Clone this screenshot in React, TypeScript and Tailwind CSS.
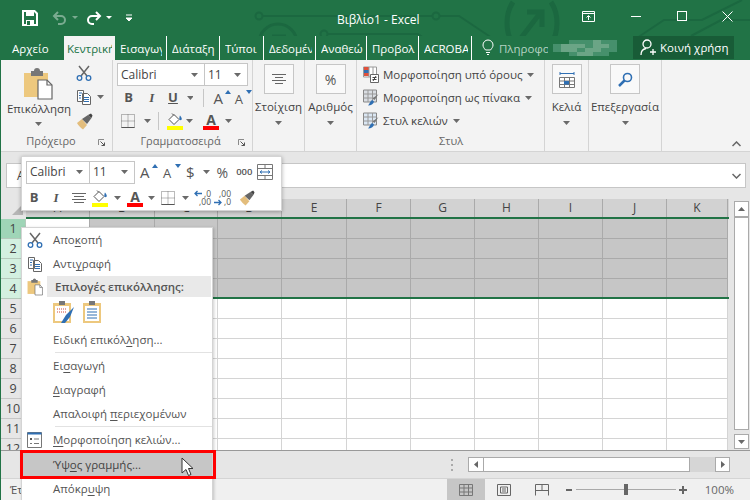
import React from "react";

const COLS = [
  ["A", 64], ["B", 65], ["C", 63], ["D", 64], ["E", 65], ["F", 64],
  ["G", 64], ["H", 64], ["I", 64], ["J", 64], ["K", 61],
] as const;
const ROWS = [1, 2, 3, 4, 5, 6, 7, 8, 9, 10, 11, 12];

const TABS = [
  ["Εισαγωγή", 52], ["Διάταξη", 53], ["Τύποι", 44], ["Δεδομένα", 52],
  ["Αναθεώρηση", 51], ["Προβολή", 52], ["ACROBAT", 53],
] as const;

const BLUR = [
  [0, 0, 1, 1, 1, 2, 1, 1, 0], [1, 2, 2, 2, 1, 2, 2, 1, 0], [1, 2, 2, 1, 2, 2, 1, 1, 0], [0, 0, 1, 2, 2, 1, 1, 0, 0],
];
const BLUR_BG = ["#217346", "#46906c", "#6ba586"];

function Caret({ className = "" }: { className?: string }) {
  return (
    <svg width="7" height="4" viewBox="0 0 7 4" className={className}>
      <path d="M0 0h7L3.5 4z" fill="#6a6a6a" />
    </svg>
  );
}

function Launcher() {
  return (
    <svg width="7" height="7" viewBox="0 0 7 7" className="absolute right-[7px] bottom-[5px]">
      <path d="M.5 6V.5H6" fill="none" stroke="#8a8a8a" />
      <path d="M2.5 2.5L6.5 6.5M3.5 6.5h3v-3" fill="none" stroke="#555" />
    </svg>
  );
}

function Scissors({ size = 16 }: { size?: number }) {
  return (
    <svg width={size} height={size} viewBox="0 0 16 16">
      <path d="M3 1l8 10M13 1L5 11" stroke="#666" strokeWidth="1.5" fill="none" />
      <circle cx="3.5" cy="13" r="2.3" fill="none" stroke="#2f6fb3" strokeWidth="1.3" />
      <circle cx="12.5" cy="13" r="2.3" fill="none" stroke="#2f6fb3" strokeWidth="1.3" />
    </svg>
  );
}

function CopyIcon() {
  return (
    <svg width="16" height="16" viewBox="0 0 16 16">
      <path d="M1.5 1.5h6v11h-6zM6.5 4.5h5l3 3v8h-8z" fill="#fff" stroke="#666" />
      <path d="M3 4h3M3 6.5h2M3 9h2M8 8.500h5M8 10.500h5M8 12.500h5" stroke="#2f6fb3" />
    </svg>
  );
}

function Brush({ size = 17 }: { size?: number }) {
  return (
    <svg width={size} height={size} viewBox="0 0 17 17">
      <path d="M1 10l5-4 5 6-4 4.500C5 15 2 12 1 10z" fill="#e3bd7c" />
      <path d="M6 6l6-4 3.500 3-4.500 6z" fill="#666" />
      <path d="M12 2l3-1.500 1.500 2L15.500 5z" fill="#444" />
    </svg>
  );
}

function PasteIcon({ small = false }: { small?: boolean }) {
  const s = small ? 16 : 30;
  return (
    <svg width={s} height={small ? 18 : 32} viewBox="0 0 30 32">
      <path d="M1 5h24v24H1z" fill="#edc87e" />
      <path d="M8 3h3a3 3 0 016 0h3v5H8z" fill="#777" />
      <path d="M15 12h9l5 5v14H15z" fill="#fff" stroke="#666" strokeWidth="1.200" />
      <path d="M24 12v5h5" fill="none" stroke="#666" strokeWidth="1.200" />
    </svg>
  );
}

function BucketIcon() {
  return (
    <span className="flex flex-col items-center w-[16px]">
      <svg width="16" height="13" viewBox="0 0 16 13">
        <path d="M7 1.500L2 6.500l5 5 5-5z" fill="#fff" stroke="#555" />
        <path d="M5 .5l2 2" stroke="#555" />
        <path d="M13 2.500c1.500 2 2.300 3.300 1.500 4.300s-2.500 0-2.200-1.300.2-2.200.7-3z" fill="#2f6fb3" />
      </svg>
      <span className="w-[16px] h-[4px] bg-[#ffff00]" />
    </span>
  );
}

function FontColor() {
  return (
    <span className="flex flex-col items-center w-[16px]">
      <span className="text-[14px] leading-[13px] h-[13px] font-bold text-[#555]">A</span>
      <span className="w-[16px] h-[4px] bg-[#ff0000]" />
    </span>
  );
}

function BorderIcon() {
  return (
    <svg width="14" height="14" viewBox="0 0 14 14">
      <path d="M.5.500h13v13H.5zM7 .5v13M.5 7h13" fill="none" stroke="#777" strokeDasharray="1 1" />
      <path d="M.5 13.500h13" stroke="#555" />
    </svg>
  );
}

function GrowFont({ down = false }: { down?: boolean }) {
  return (
    <span className="relative inline-flex w-[18px] h-[16px] items-end">
      <span className={`${down ? "text-[13px]" : "text-[15px]"} leading-none text-[#555] font-medium`}>A</span>
      <svg width="6" height="4" viewBox="0 0 6 4" className="absolute right-0 top-0">
        <path d={down ? "M0 0h6L3 4z" : "M0 4h6L3 0z"} fill="#2f6fb3" />
      </svg>
    </span>
  );
}

function DecimalIcon({ top, bottom, arrowTop }: { top: string; bottom: string; arrowTop: boolean }) {
  return (
    <span className="relative w-[17px] h-[18px] text-[8.500px] leading-[8px] text-[#555] text-right flex flex-col justify-center">
      <span>{top}</span>
      <span>{bottom}</span>
      <svg width="8" height="7" viewBox="0 0 8 7" className={`absolute left-0 ${arrowTop ? "top-[1px]" : "bottom-[1px]"}`}>
        {arrowTop
          ? <path d="M8 3.500H1M3.500 1L1 3.500 3.500 6" fill="none" stroke="#2f6fb3" strokeWidth="1.300" />
          : <path d="M0 3.500h7M4.500 1L7 3.500 4.500 6" fill="none" stroke="#2f6fb3" strokeWidth="1.300" />}
      </svg>
    </span>
  );
}

function Combo({ label, w }: { label: string; w: string }) {
  return (
    <div className={`${w} h-[23px] flex items-center justify-between bg-white border border-[#c6c6c6] pl-[3px] pr-[6px] text-[12px] text-[#444]`}>
      <span>{label}</span>
      <Caret />
    </div>
  );
}

function CondFormatIcon() {
  return (
    <svg width="16" height="17" viewBox="0 0 16 17">
      <path d="M.5 1h13v10H.5z" fill="#fff" stroke="#999" />
      <path d="M1 1h5v3H1z" fill="#e0503a" />
      <path d="M1 4h5v3H1z" fill="#2f6fb3" />
      <path d="M1 7h5v3H1z" fill="#e0503a" />
      <path d="M6 1v10M10 1v10" stroke="#999" />
      <path d="M7.500 8.500h8v8h-8z" fill="#fff" stroke="#666" />
      <path d="M9.500 11.500h4M9.500 13.500h4M10 15l3-5" stroke="#444" />
    </svg>
  );
}

function TableIcon({ tint }: { tint: string }) {
  return (
    <svg width="16" height="17" viewBox="0 0 16 17">
      <path d="M.5 1h13v12H.5z" fill={tint} stroke="#888" />
      <path d="M5 1v12M9.500 1v12M.5 5h13M.5 9h13" stroke="#999" />
      <path d="M15.500 5l-4 6-2-1.500z" fill="#777" />
      <path d="M9 11l2 1.500c-.5 2.500-3 4-6 4 1.500-1 2-4.500 4-5.500z" fill="#2f6fb3" />
    </svg>
  );
}

function StyleRow({ label, icon }: { label: string; icon: React.ReactNode }) {
  return (
    <div className="h-[23px] flex items-center gap-[4px] text-[11.500px] text-[#444] whitespace-nowrap">
      {icon}
      <span>{label}</span>
      <Caret className="ml-[1px]" />
    </div>
  );
}

function RibbonBigButton({ label, w, children }: { label: string; w: string; children: React.ReactNode }) {
  return (
    <div className={`${w} shrink-0 border-r border-[#d4d4d4] flex flex-col items-center pt-[4px] text-[11.500px] text-[#444]`}>
      <div className="w-[30px] h-[30px] flex items-center justify-center bg-[#f9f9f9] border border-[#c6c6c6]">{children}</div>
      <div className="mt-[5px] leading-[16px] whitespace-nowrap">{label}</div>
      <Caret className="mt-[6px]" />
    </div>
  );
}

function MenuItem({ children, icon }: { children: React.ReactNode; icon?: React.ReactNode }) {
  return (
    <div className="relative h-[24px] flex items-center pl-[31px] text-[11.500px] text-[#555] whitespace-nowrap">
      {icon && <span className="absolute left-[5px] top-[4px]">{icon}</span>}
      <span>{children}</span>
    </div>
  );
}

function U({ children }: { children: React.ReactNode }) {
  return <span className="underline underline-offset-2">{children}</span>;
}

function Circuit() {
  return (
    <svg width="750" height="60" viewBox="0 0 750 60" className="absolute left-0 top-0" fill="none" stroke="#1b6840" strokeWidth="2">
      <circle cx="258" cy="16" r="3.500" />
      <path d="M262 16h169M439 16h19l36 24" />
      <circle cx="435" cy="16" r="3.500" />
      <circle cx="323" cy="34" r="3.500" />
      <path d="M327 34h90l6 4" />
      <circle cx="277" cy="43" r="19" strokeWidth="3" />
      <path d="M271 36h14M271 36v14M271 36l16 16" strokeWidth="3" />
      <path d="M512 2c-8 12-8 30 0 42M550 2c8 12 8 30 0 42" strokeWidth="5" />
      <path d="M520 38l20-26M526 12h15v15" strokeWidth="5" />
      <path d="M633 40l30-20h38l40-20M690 36l30-16h30" />
    </svg>
  );
}

export default function App() {
  return (
    <div className="relative w-[750px] h-[500px] overflow-hidden flex flex-col bg-[#e6e6e6] font-['Open_Sans','Noto_Sans',sans-serif] text-[#444] border-l border-[#217346]">
      {/* Title bar */}
      <div className="relative h-[36px] shrink-0 bg-[#217346] flex items-center text-white pl-[21px]">
        <Circuit />
        <svg width="16" height="16" viewBox="0 0 16 16" className="relative">
          <path d="M1 1h11.500L15 3.500V15H1z" fill="none" stroke="#fff" strokeWidth="2" />
          <path d="M4 1h8v5H4zM4 10h8v5H4z" fill="#fff" />
          <path d="M5 11h3v4H5z" fill="#217346" />
        </svg>
        <svg width="30" height="14" viewBox="0 0 30 14" className="relative ml-[14px] opacity-40">
          <path d="M6 1L2 5l4 4M2 5h7a4 4 0 010 8H6" fill="none" stroke="#fff" strokeWidth="2" />
          <path d="M20 5h6l-3 3z" fill="#fff" />
        </svg>
        <svg width="30" height="14" viewBox="0 0 30 14" className="relative ml-[4px]">
          <path d="M10 1l4 4-4 4M14 5H6a4 4 0 000 8h2" fill="none" stroke="#fff" strokeWidth="2" />
          <path d="M20 5h6l-3 3z" fill="#fff" />
        </svg>
        <svg width="8" height="8" viewBox="0 0 8 8" className="relative ml-[9px]">
          <path d="M1 1h6M1 4h6L4 7z" stroke="#fff" fill="#fff" />
        </svg>
        <div className="absolute left-[336px] top-[11px] text-[12px] leading-[18px] whitespace-nowrap">Βιβλίο1 - Excel</div>
        <svg width="14" height="12" viewBox="0 0 14 12" className="absolute left-[581px] top-[11px]">
          <path d="M.5.5h12v10H.5zM.5 2.500h12M6.500 9V5M4.500 6.500l2-2 2 2" fill="none" stroke="#fff" />
        </svg>
        <div className="absolute left-[630px] top-[16px] w-[10px] h-px bg-white" />
        <div className="absolute left-[676px] top-[11px] w-[10px] h-[10px] border border-white" />
        <svg width="11" height="11" viewBox="0 0 11 11" className="absolute left-[721px] top-[11px]">
          <path d="M.5.5l10 10M10.500.5l-10 10" stroke="#fff" />
        </svg>
      </div>

      {/* Tabs */}
      <div className="relative h-[24px] shrink-0 bg-[#217346] flex items-stretch text-[11.500px] text-white whitespace-nowrap">
        <div className="w-[63px] pl-[11px] leading-[25px]">Αρχείο</div>
        <div className="w-[51px] bg-[#f3f3f3] text-[#217346] pl-[3px] leading-[25px] overflow-hidden">
          <div className="w-[45px] overflow-hidden">Κεντρική</div>
        </div>
        {TABS.map(([name, w], i) => (
          <div key={name} className="shrink-0 pl-[5px] leading-[25px] overflow-hidden" style={{ width: w }}>
            <div className="overflow-hidden h-full border-r border-white pr-0" style={{ width: w - 5 }}>
              <div className="overflow-hidden" style={{ width: w - 9 - (i === 0 ? 1 : 0) }}>{name}</div>
            </div>
          </div>
        ))}
        <svg width="12" height="17" viewBox="0 0 12 17" className="ml-[10px] mt-[3px] relative">
          <path d="M3.500 11C2 9 1 8 1 6a5 5 0 0110 0c0 2-1 3-2.500 5zM4 13.500h4M5 15.500h2" fill="none" stroke="#fff" />
        </svg>
        <div className="relative ml-[5px] w-[49px] overflow-hidden leading-[25px] text-[#b5d2c2]">Πληροφορίες</div>
        <div className="relative ml-[5px] mt-[4px] w-[72px] grid grid-cols-9 h-[16px]">
          {BLUR.flat().map((v, i) => (
            <span key={i} style={{ backgroundColor: BLUR_BG[v] }} />
          ))}
        </div>
        <div className="absolute left-[632px] top-0 w-[101px] h-[23px] bg-[#185c37] flex items-center pl-[7px] gap-[4px]">
          <svg width="16" height="17" viewBox="0 0 16 17">
            <circle cx="7" cy="5" r="4" fill="none" stroke="#fff" strokeWidth="1.300" />
            <path d="M1 16c0-4 2-6 5-6.500M10 13h6M13 10v6" fill="none" stroke="#fff" strokeWidth="1.300" />
          </svg>
          <span>Κοινή χρήση</span>
        </div>
      </div>

      {/* Ribbon */}
      <div className="relative h-[92px] shrink-0 bg-[#f3f3f3] border-b border-[#d4d4d4] flex">
        <div className="relative w-[112px] shrink-0 border-r border-[#d4d4d4] flex">
          <div className="w-[74px] flex flex-col items-center pt-[8px]">
            <PasteIcon />
            <div className="mt-[1px] text-[11.500px] leading-[16px] pl-[2px]">Επικόλληση</div>
            <Caret className="mt-[5px]" />
          </div>
          <div className="flex flex-col pt-[5px] pl-[1px] gap-[8px]">
            <Scissors />
            <div className="flex items-center gap-[5px]">
              <CopyIcon />
              <Caret />
            </div>
            <Brush />
          </div>
          <div className="absolute left-0 w-[100px] text-center bottom-[2px] text-[11px] text-[#666]">Πρόχειρο</div>
          <Launcher />
        </div>

        <div className="relative w-[140px] shrink-0 border-r border-[#d4d4d4] pt-[3px] pl-[4px]">
          <div className="flex">
            <Combo label="Calibri" w="w-[88px]" />
            <Combo label="11" w="w-[44px] -ml-px" />
          </div>
          <div className="flex items-center h-[24px] text-[13px] text-[#555]">
            <span className="w-[24px] text-center font-bold">B</span>
            <span className="w-[24px] text-center italic font-['Liberation_Serif',serif] font-bold">I</span>
            <span className="w-[20px] text-center underline font-bold">U</span>
            <Caret className="ml-[4px]" />
            <span className="w-px h-[18px] bg-[#c6c6c6] ml-[10px] mr-[9px]" />
            <GrowFont />
            <span className="w-[4px]" />
            <GrowFont down />
          </div>
          <div className="flex items-center h-[22px]">
            <span className="ml-[4px]"><BorderIcon /></span>
            <Caret className="ml-[9px]" />
            <span className="w-px h-[18px] bg-[#c6c6c6] ml-[7px] mr-[8px]" />
            <BucketIcon />
            <Caret className="ml-[3px]" />
            <span className="ml-[10px]"><FontColor /></span>
            <Caret className="ml-[6px]" />
          </div>
          <div className="absolute left-0 w-[135px] text-center bottom-[2px] text-[11px] text-[#666]">Γραμματοσειρά</div>
          <Launcher />
        </div>

        <RibbonBigButton label="Στοίχιση" w="w-[52px]">
          <svg width="14" height="11" viewBox="0 0 14 11">
            <path d="M0 .5h14M3 3.500h8M0 6.500h14M3 9.500h8" stroke="#666" />
          </svg>
        </RibbonBigButton>
        <RibbonBigButton label="Αριθμός" w="w-[52px]">
          <span className="text-[14px] text-[#555]">%</span>
        </RibbonBigButton>

        <div className="relative w-[188px] shrink-0 border-r border-[#d4d4d4] pt-[3px] pl-[6px]">
          <StyleRow label="Μορφοποίηση υπό όρους" icon={<CondFormatIcon />} />
          <StyleRow label="Μορφοποίηση ως πίνακα" icon={<TableIcon tint="#d9dde2" />} />
          <StyleRow label="Στυλ κελιών" icon={<TableIcon tint="#dbe7f3" />} />
          <div className="absolute left-0 w-[188px] text-center bottom-[2px] text-[11px] text-[#666]">Στυλ</div>
        </div>

        <RibbonBigButton label="Κελιά" w="w-[44px]">
          <svg width="16" height="17" viewBox="0 0 16 17">
            <path d="M1 1v3M15 1v3M1 2.500h14" stroke="#2f6fb3" />
            <path d="M.5 6.500h15v10H.5zM5.500 6.500v10M10.500 6.500v10M.5 10h15M.5 13.500h15" fill="#fff" stroke="#777" />
            <path d="M5 10h5v3.500H5z" fill="#2f6fb3" />
          </svg>
        </RibbonBigButton>
        <RibbonBigButton label="Επεξεργασία" w="w-[73px]">
          <svg width="15" height="15" viewBox="0 0 15 15">
            <circle cx="9.500" cy="5.500" r="4" fill="none" stroke="#2f6fb3" strokeWidth="1.600" />
            <path d="M6.500 8.500L1 14" stroke="#2f6fb3" strokeWidth="2.500" />
          </svg>
        </RibbonBigButton>
        <svg width="9" height="6" viewBox="0 0 9 6" className="absolute left-[731px] top-[81px]">
          <path d="M.5 5l4-4 4 4" fill="none" stroke="#666" strokeWidth="1.500" />
        </svg>
      </div>

      {/* Formula bar */}
      <div className="h-[47px] shrink-0 bg-[#e6e6e6] flex pt-[11px] pr-[4px]">
        <div className="w-[49px] h-[25px] ml-[5px] bg-white border border-[#c6c6c6] pl-[10px] text-[12px] leading-[23px]">A</div>
        <div className="relative flex-1 ml-[114px] h-[25px] bg-white border border-[#c6c6c6]">
          <svg width="9" height="6" viewBox="0 0 9 6" className="absolute right-[4px] top-[9px]">
            <path d="M.5 1l4 4 4-4" fill="none" stroke="#666" strokeWidth="1.500" />
          </svg>
        </div>
      </div>

      {/* Grid */}
      <div className="relative flex-1 min-h-0 overflow-hidden flex">
        <div className="w-[728px] shrink-0">
          <div className="flex h-[18px] bg-[#d2d2d2]">
            <div className="relative w-[25px] shrink-0 bg-[#e6e6e6]">
              <svg width="11" height="11" viewBox="0 0 11 11" className="absolute right-[3px] bottom-[2px]">
                <path d="M11 0v11H0z" fill="#b5b5b5" />
              </svg>
            </div>
            {COLS.map(([c, w]) => (
              <div key={c} className="shrink-0 border-r border-[#aaaaaa] text-center text-[12px] leading-[18px] text-[#444]" style={{ width: w }}>{c}</div>
            ))}
          </div>
          <div className="h-[2px] bg-[#217346] ml-[25px]" />
          {ROWS.map((r) => {
            const sel = r <= 4;
            return (
              <div key={r} className="flex h-[20px]">
                <div className={`w-[25px] shrink-0 text-center text-[12.500px] leading-[20px] border-r border-b ${r === 1 ? "bg-[#9fd5b7] border-[#b5c9bb]" : sel ? "bg-[#d3f0e0] border-[#b5c9bb]" : "bg-[#e6e6e6] border-[#c6c6c6]"}`}>{r}</div>
                {COLS.map(([c, w]) => (
                  <div
                    key={c}
                    className={`shrink-0 border-r border-b ${sel ? (r === 1 && c === "A" ? "bg-white border-[#aaaaaa]" : "bg-[#c6c6c6] border-[#aaaaaa]") : "bg-white border-[#d4d4d4]"}`}
                    style={{ width: w }}
                  />
                ))}
              </div>
            );
          })}
          <div className="absolute left-[25px] top-[98px] w-[703px] h-[2px] bg-[#217346]" />
        </div>
        <div className="flex flex-col items-center w-[21px] pt-[2px] pl-[3px]">
          <div className="w-[15px] h-[16px] bg-white border border-[#aaaaaa] flex items-center justify-center">
            <svg width="7" height="4" viewBox="0 0 7 4"><path d="M0 4h7L3.500 0z" fill="#666" /></svg>
          </div>
          <div className="w-[15px] h-[213px] bg-white border border-[#aaaaaa]" />
          <div className="flex-1" />
          <div className="w-[15px] h-[15px] bg-white border border-[#aaaaaa] flex items-center justify-center mb-[1px]">
            <Caret />
          </div>
        </div>
      </div>

      {/* Sheet bar */}
      <div className="h-[28px] shrink-0 bg-[#e6e6e6] border-t border-[#999] flex items-center justify-end pr-[20px]">
        <div className="flex flex-col gap-[3px] mr-[15px]">
          <span className="w-[2px] h-[2px] bg-[#aaa]" />
          <span className="w-[2px] h-[2px] bg-[#aaa]" />
          <span className="w-[2px] h-[2px] bg-[#aaa]" />
        </div>
        <div className="flex w-[262px] h-[15px] bg-[#d6d6d6]">
          <div className="w-[16px] bg-white border border-[#aaaaaa] flex items-center justify-center">
            <svg width="4" height="7" viewBox="0 0 4 7"><path d="M4 0v7L0 3.500z" fill="#666" /></svg>
          </div>
          <div className="w-[207px] bg-white border border-[#aaaaaa] -ml-px" />
          <div className="flex-1" />
          <div className="w-[15px] bg-white border border-[#aaaaaa] flex items-center justify-center">
            <svg width="4" height="7" viewBox="0 0 4 7"><path d="M0 0v7L4 3.500z" fill="#666" /></svg>
          </div>
        </div>
      </div>

      {/* Status bar */}
      <div className="h-[22px] shrink-0 bg-[#f0f0f0] border-t border-[#d4d4d4] flex items-center text-[11.500px] text-[#555]">
        <span className="pl-[9px]">Έτοιμο</span>
        <div className="flex-1" />
        <div className="w-[38px] h-[21px] bg-[#c6c6c6] flex items-center justify-center">
          <svg width="14" height="12" viewBox="0 0 14 12"><path d="M.5.5h13v11H.5zM5 .5v11M9.500.5v11M.5 4h13M.5 8h13" fill="none" stroke="#777" /></svg>
        </div>
        <div className="w-[38px] flex items-center justify-center">
          <svg width="14" height="12" viewBox="0 0 14 12"><path d="M.5.5h13v11H.5zM3.500 3h7v6h-7zM5 5h4M5 7h4" fill="none" stroke="#666" /></svg>
        </div>
        <div className="w-[38px] flex items-center justify-center">
          <svg width="14" height="12" viewBox="0 0 14 12"><path d="M.5 11.500V.5h13v11M7 .5v6H.5M7 6.500h6.500" fill="none" stroke="#666" /></svg>
        </div>
        <span className="w-[6px] h-[2px] bg-[#666] ml-[5px]" />
        <div className="relative w-[100px] h-px bg-[#aaa] ml-[4px]">
          <span className="absolute left-[48px] -top-[5px] w-[4px] h-[11px] bg-[#666]" />
        </div>
        <span className="relative w-[8px] h-[2px] bg-[#666] ml-[3px]">
          <span className="absolute left-[3px] -top-[3px] w-[2px] h-[8px] bg-[#666]" />
        </span>
        <span className="ml-[18px] mr-[16px] text-[#666]">100%</span>
      </div>

      {/* Mini toolbar */}
      <div className="absolute left-[20px] top-[156px] w-[261px] h-[55px] bg-white border border-[#d4d4d4] shadow-[0_1px_4px_rgba(0,0,0,0.3)] px-[4px] pt-[3px]">
        <div className="flex items-center h-[24px]">
          <Combo label="Calibri" w="w-[64px]" />
          <Combo label="11" w="w-[46px] -ml-px" />
          <span className="ml-[5px]"><GrowFont /></span>
          <span className="ml-[5px]"><GrowFont down /></span>
          <span className="ml-[5px] text-[15px] text-[#555]">$</span>
          <Caret className="ml-[8px]" />
          <span className="ml-[7px] text-[14px] font-medium text-[#555]">%</span>
          <span className="ml-[8px] text-[9.500px] font-semibold text-[#555]">000</span>
          <svg width="16" height="16" viewBox="0 0 16 16" className="ml-[5px]">
            <path d="M.5.5h15v15H.5zM.5 4.500h15M.5 11.500h15M8 .5v4M8 11.500v4" fill="none" stroke="#777" />
            <path d="M3 8h10M3 8l2-1.500M3 8l2 1.500M13 8l-2-1.500M13 8l-2 1.500" stroke="#2f6fb3" fill="none" />
          </svg>
        </div>
        <div className="flex items-center h-[24px] mt-[2px]">
          <span className="w-[16px] text-center text-[13px] font-bold text-[#555]">B</span>
          <span className="w-[20px] ml-[4px] text-center text-[13px] italic font-bold font-['Liberation_Serif',serif] text-[#555]">I</span>
          <svg width="14" height="11" viewBox="0 0 14 11" className="ml-[6px]">
            <path d="M0 .5h14M2 3.500h10M0 6.500h14M2 9.500h10" stroke="#666" />
          </svg>
          <span className="ml-[6px]"><BucketIcon /></span>
          <Caret className="ml-[6px]" />
          <span className="ml-[6px]"><FontColor /></span>
          <Caret className="ml-[5px]" />
          <span className="ml-[6px]"><BorderIcon /></span>
          <Caret className="ml-[7px]" />
          <span className="ml-[5px]"><DecimalIcon top=",0" bottom=",00" arrowTop /></span>
          <span className="ml-[3px]"><DecimalIcon top=",00" bottom=",0" arrowTop={false} /></span>
          <span className="ml-[8px]"><Brush size={16} /></span>
        </div>
      </div>

      {/* Context menu */}
      <div className="absolute left-[20px] top-[227px] w-[192px] h-[280px] bg-white border border-[#d4d4d4] shadow-[1px_1px_3px_rgba(0,0,0,0.2)]">
        <MenuItem icon={<Scissors />}>Απο<U>κ</U>οπή</MenuItem>
        <MenuItem icon={<CopyIcon />}>Αντι<U>γ</U>ραφή</MenuItem>
        <div className="relative h-[21px] ml-[25px] mr-[1px] bg-[#e9e9e9] pl-[8px] text-[11.500px] font-semibold leading-[21px] text-[#555] whitespace-nowrap">
          Επιλογές επικόλλησης:
          <span className="absolute -left-[20px] top-[2px]"><PasteIcon small /></span>
        </div>
        <div className="flex h-[31px] items-center pl-[31px] gap-[9px]">
          <svg width="21" height="25" viewBox="0 0 21 25">
            <path d="M0 3h18v20H0z" fill="#edc87e" />
            <path d="M2 6h14v15H2z" fill="#fff" />
            <path d="M6 1h6v4H6z" fill="#777" />
            <path d="M4 9h10M4 12h10" stroke="#d04a3a" strokeDasharray="1 1" />
            <path d="M8 23l5-8 8-8-4 10-5 6z" fill="#2f6fb3" />
          </svg>
          <svg width="18" height="25" viewBox="0 0 18 25">
            <path d="M0 3h18v20H0z" fill="#edc87e" />
            <path d="M2 6h14v15H2z" fill="#fff" />
            <path d="M6 1h6v4H6z" fill="#777" />
            <path d="M4 9h10M4 12h10M4 15h10M4 18h10" stroke="#2f6fb3" />
          </svg>
        </div>
        <MenuItem>Ειδική επικόλ<U>λ</U>ηση...</MenuItem>
        <div className="h-px bg-[#e2e2e2] ml-[33px] mb-px" />
        <MenuItem>Ει<U>σ</U>αγωγή</MenuItem>
        <MenuItem><U>Δ</U>ιαγραφή</MenuItem>
        <MenuItem>Απαλοιφή <U>π</U>εριεχομένων</MenuItem>
        <div className="h-px bg-[#e2e2e2] ml-[33px] mb-px" />
        <MenuItem
          icon={
            <svg width="15" height="16" viewBox="0 0 15 16">
              <path d="M.5.5h14v15H.5z" fill="#fff" stroke="#777" />
              <path d="M.5.5h14v2H.5z" fill="#2f6fb3" />
              <path d="M3 6h2v2H3z" fill="#555" />
              <path d="M3 11.500h2M7 7h5M7 11.500h5" stroke="#777" />
            </svg>
          }
        >
          <U>Μ</U>ορφοποίηση κελιών...
        </MenuItem>
        <div className="relative h-[25px] bg-[#c6c6c6] flex items-center pl-[31px] text-[11.500px] text-[#444] whitespace-nowrap">
          <span>Ύψ<U>ο</U>ς γραμμής...</span>
        </div>
        <MenuItem>Απόκρ<U>υ</U>ψη</MenuItem>
      </div>

      {/* Callout and pointer */}
      <div className="absolute left-[19px] top-[450px] w-[196px] h-[29px] border-[3px] border-[#ff0000]" />
      <svg width="14" height="20" viewBox="0 0 14 20" className="absolute left-[180px] top-[457px]">
        <path d="M1 1v15l4-3.500 2.500 6 2.500-1-2.500-6H12z" fill="#fff" stroke="#333" />
      </svg>
    </div>
  );
}
